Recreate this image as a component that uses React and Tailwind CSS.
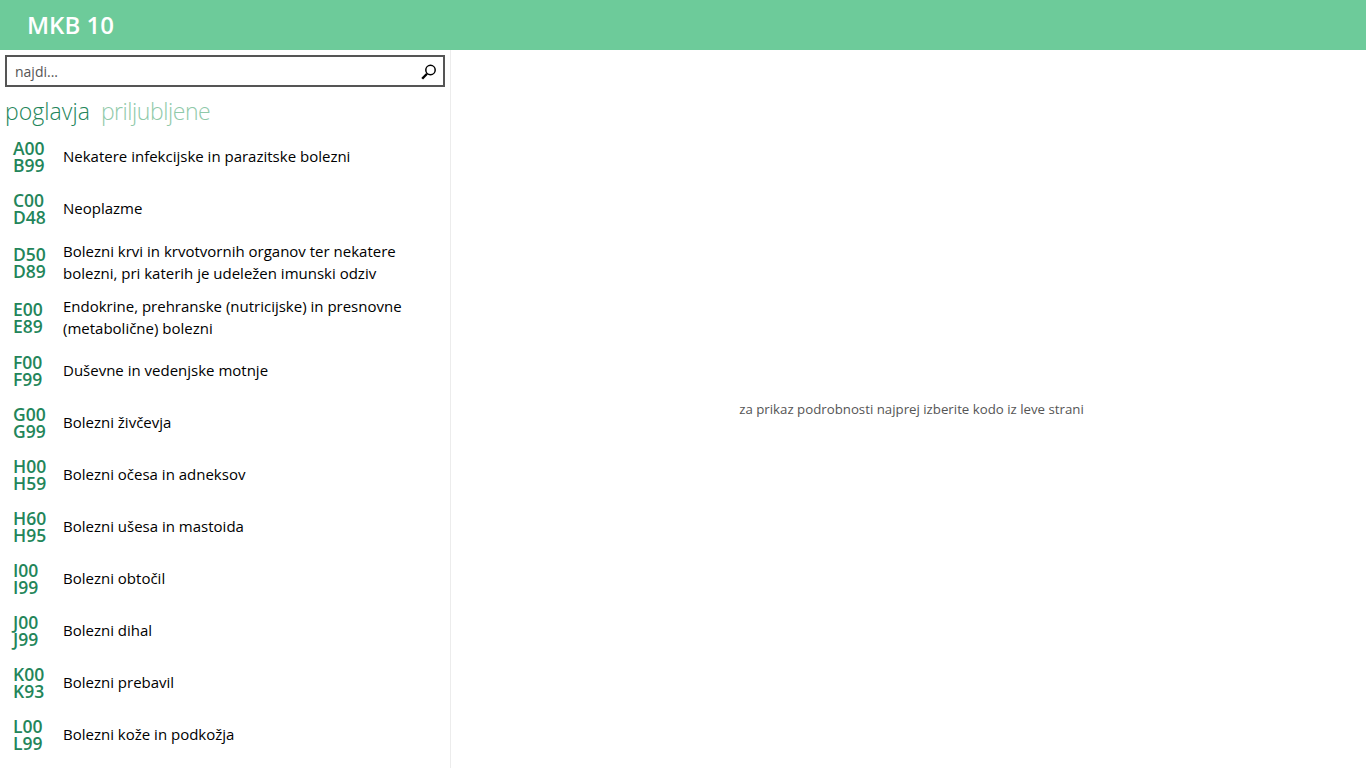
import React from 'react';

const chapters = [
  ['A00', 'B99', 'Nekatere infekcijske in parazitske bolezni'],
  ['C00', 'D48', 'Neoplazme'],
  ['D50', 'D89', 'Bolezni krvi in krvotvornih organov ter nekatere bolezni, pri katerih je udeležen imunski odziv'],
  ['E00', 'E89', 'Endokrine, prehranske (nutricijske) in presnovne (metabolične) bolezni'],
  ['F00', 'F99', 'Duševne in vedenjske motnje'],
  ['G00', 'G99', 'Bolezni živčevja'],
  ['H00', 'H59', 'Bolezni očesa in adneksov'],
  ['H60', 'H95', 'Bolezni ušesa in mastoida'],
  ['I00', 'I99', 'Bolezni obtočil'],
  ['J00', 'J99', 'Bolezni dihal'],
  ['K00', 'K93', 'Bolezni prebavil'],
  ['L00', 'L99', 'Bolezni kože in podkožja'],
];

const App = () => {
  return (
    <div className="h-[768px] w-[1366px] overflow-hidden bg-white font-['Open_Sans','Noto_Sans',sans-serif] flex flex-col">
      <header className="h-[50px] shrink-0 bg-[#6dcb9a] pl-[27px] flex items-center">
        <h1 className="text-[24px] font-semibold text-white">MKB 10</h1>
      </header>
      <div className="flex flex-1 min-h-0">
        <aside className="w-[451px] shrink-0 border-r border-[#ececec] pl-[5px] pt-[5px] overflow-hidden">
          <div className="w-[440px] h-[32px] border-2 border-[#555] flex items-center justify-between pl-[8px] pr-[5px]">
            <span className="text-[14px] text-[#555]">najdi...</span>
            <svg width="18" height="18" viewBox="0 0 18 18" fill="none" stroke="#000">
              <circle cx="10.5" cy="8" r="4.7" strokeWidth="1.5" />
              <path d="M7 11.7 L2.2 16.8" strokeWidth="2.4" />
            </svg>
          </div>
          <div className="flex gap-[11px] mt-[8px] text-[23px] leading-[32px] font-light">
            <span className="text-[#23855a] tracking-[0.05px]">poglavja</span>
            <span className="text-[#8fc9a9] tracking-[-0.45px]">priljubljene</span>
          </div>
          <ul className="mt-[3px]">
            {chapters.map(([from, to, name]) => (
              <li key={from} className="flex items-center min-h-[52px]">
                <div className="w-[58px] pl-[8px] pt-[2px] shrink-0 text-[17.5px] leading-[17px] font-semibold text-[#23855a]">
                  {from}
                  <br />
                  {to}
                </div>
                <p className="w-[350px] py-[5.5px] text-[15px] leading-[22px] text-black">{name}</p>
              </li>
            ))}
          </ul>
        </aside>
        <main className="flex-1 flex items-center justify-center pl-[6px] pt-[2px]">
          <p className="text-[13.25px] text-[#555]">za prikaz podrobnosti najprej izberite kodo iz leve strani</p>
        </main>
      </div>
    </div>
  );
};

export default App;
